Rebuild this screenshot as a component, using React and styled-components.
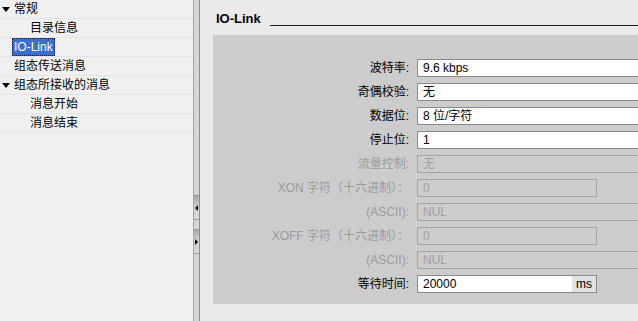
import React from 'react';
import styled, { createGlobalStyle } from 'styled-components';

const GlobalStyle = createGlobalStyle`
  html, body {
    margin: 0;
    padding: 0;
  }
  body {
    font-family: "Liberation Sans", "Noto Sans CJK SC", sans-serif;
    font-size: 12px;
    background: #eaeaea;
    overflow: hidden;
  }
`;

const Layout = styled.div`
  display: flex;
  width: 638px;
  height: 321px;
  overflow: hidden;
`;

const Tree = styled.ul`
  width: 193px;
  flex: none;
  margin: 0;
  padding: 0;
  list-style: none;
  background: #f0f0f0;
  border-right: 1px solid #a2a2a2;
`;

const TreeRow = styled.li`
  height: 18px;
  border-bottom: 1px solid #e4e4e4;
  display: flex;
  align-items: center;
  padding-left: ${({ $level }) => 2 + $level * 16}px;
  color: #000;
`;

const Toggle = styled.span`
  width: 12px;
  flex: none;
  display: flex;
  align-items: center;

  &::before {
    content: '';
    display: ${({ $open }) => ($open ? 'block' : 'none')};
    border-left: 4px solid transparent;
    border-right: 4px solid transparent;
    border-top: 5px solid #000;
    margin-top: 1px;
  }
`;

const TreeLabel = styled.span`
  line-height: 16px;
  padding: 0 1px;
  margin-left: -2px;
  border: 1px dotted ${({ $selected }) => ($selected ? '#0d1a40' : 'transparent')};
  background: ${({ $selected }) => ($selected ? '#3b6dd3' : 'transparent')};
  color: ${({ $selected }) => ($selected ? '#fff' : '#000')};
  white-space: nowrap;
`;

const Splitter = styled.div`
  width: 5px;
  flex: none;
  background: #d6d6d6;
  border-right: 1px solid #8e8e8e;
  display: flex;
  flex-direction: column;
  gap: 9px;
  padding-top: 195px;
`;

const SplitButton = styled.div`
  height: 23px;
  border-top: 1px solid #9a9a9a;
  border-bottom: 1px solid #9a9a9a;
  background: linear-gradient(#a8a8a8, #cfcfcf 45%, #dadada);
  display: flex;
  align-items: center;
  justify-content: center;

  &::before {
    content: '';
    border-top: 3px solid transparent;
    border-bottom: 3px solid transparent;
    ${({ $dir }) =>
      $dir === 'left'
        ? 'border-right: 3px solid #000;'
        : 'border-left: 3px solid #000;'}
  }
`;

const Content = styled.div`
  flex: 1;
  min-width: 0;
  background: #eaeaea;
  overflow: hidden;
  display: flex;
  flex-direction: column;
`;

const Header = styled.div`
  height: 35px;
  box-sizing: border-box;
  display: flex;
  align-items: flex-start;
  padding: 11px 0 0 16px;
`;

const Title = styled.h2`
  margin: 0;
  font-size: 13px;
  font-weight: 700;
  line-height: 16px;
  color: #000;
`;

const Rule = styled.div`
  flex: 1;
  margin: 14px 0 0 9px;
  border-top: 1px solid #1a1a1a;
`;

const Panel = styled.div`
  margin-left: 13px;
  width: 520px;
  background: #cccccc;
  padding: 24px 0 11px;
  display: grid;
  grid-template-columns: 196px auto;
  column-gap: 8px;
  row-gap: 6px;
  justify-content: start;
`;

const Label = styled.div`
  text-align: right;
  line-height: 18px;
  height: 18px;
  white-space: nowrap;
  color: ${({ $disabled }) => ($disabled ? '#9b9b9b' : '#000')};
`;

const Field = styled.div`
  width: ${({ $short }) => ($short ? '180px' : '260px')};
  height: 18px;
  box-sizing: border-box;
  display: flex;
  border: 1px solid ${({ $disabled }) => ($disabled ? '#a3a3a3' : '#8a8a8a')};
  background: ${({ $disabled }) => ($disabled ? 'transparent' : '#fff')};
  color: ${({ $disabled }) => ($disabled ? '#a2a2a2' : '#000')};
`;

const Value = styled.span`
  flex: 1;
  padding-left: 5px;
  line-height: 16px;
  white-space: nowrap;
`;

const Unit = styled.span`
  width: 24px;
  flex: none;
  background: #e2e2e2;
  text-align: center;
  line-height: 16px;
  color: #000;
`;

const treeItems = [
  { label: '常规', level: 0, open: true },
  { label: '目录信息', level: 1 },
  { label: 'IO-Link', level: 0, selected: true },
  { label: '组态传送消息', level: 0 },
  { label: '组态所接收的消息', level: 0, open: true },
  { label: '消息开始', level: 1 },
  { label: '消息结束', level: 1 },
];

const fields = [
  { label: '波特率:', value: '9.6 kbps' },
  { label: '奇偶校验:', value: '无' },
  { label: '数据位:', value: '8 位/字符' },
  { label: '停止位:', value: '1' },
  { label: '流量控制:', value: '无', disabled: true },
  { label: 'XON 字符（十六进制）：', value: '0', disabled: true, short: true },
  { label: '(ASCII):', value: 'NUL', disabled: true },
  { label: 'XOFF 字符（十六进制）：', value: '0', disabled: true, short: true },
  { label: '(ASCII):', value: 'NUL', disabled: true },
  { label: '等待时间:', value: '20000', unit: 'ms', short: true },
];

export default function App() {
  return (
    <>
      <GlobalStyle />
      <Layout>
        <Tree>
          {treeItems.map((item, i) => (
            <TreeRow key={i} $level={item.level}>
              <Toggle $open={item.open} />
              <TreeLabel $selected={item.selected}>{item.label}</TreeLabel>
            </TreeRow>
          ))}
        </Tree>
        <Splitter>
          <SplitButton $dir="left" />
          <SplitButton $dir="right" />
        </Splitter>
        <Content>
          <Header>
            <Title>IO-Link</Title>
            <Rule />
          </Header>
          <Panel>
            {fields.map((f, i) => (
              <React.Fragment key={i}>
                <Label $disabled={f.disabled}>{f.label}</Label>
                <Field $disabled={f.disabled} $short={f.short}>
                  <Value>{f.value}</Value>
                  {f.unit && <Unit>{f.unit}</Unit>}
                </Field>
              </React.Fragment>
            ))}
          </Panel>
        </Content>
      </Layout>
    </>
  );
}
